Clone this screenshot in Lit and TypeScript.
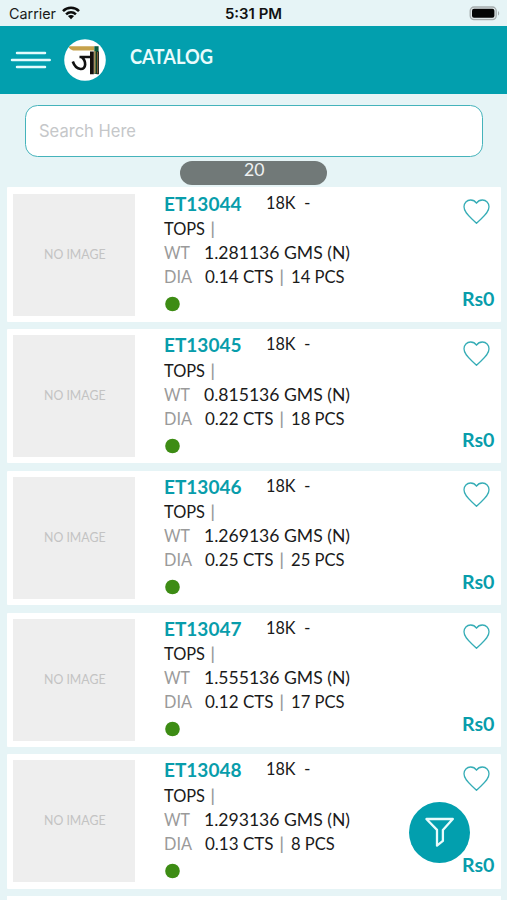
import { LitElement, html, svg, css } from "lit";
import { customElement, property } from "lit/decorators.js";

/** A line of text set to an exact advance width. */
const fit = (text: string, width: number, cls: string, height = 24, baseline = 18) => html`
  <svg class="fit ${cls}" width=${width} height=${height}>
    ${svg`<text x="0" y=${baseline} textLength=${width} lengthAdjust="spacingAndGlyphs">${text}</text>`}
  </svg>`;

interface Item {
  code: string;
  weight: string;
  carats: string;
  pieces: string;
}

const ITEMS: Item[] = [
  { code: "ET13044", weight: "1.281136", carats: "0.14", pieces: "14" },
  { code: "ET13045", weight: "0.815136", carats: "0.22", pieces: "18" },
  { code: "ET13046", weight: "1.269136", carats: "0.25", pieces: "25" },
  { code: "ET13047", weight: "1.555136", carats: "0.12", pieces: "17" },
  { code: "ET13048", weight: "1.293136", carats: "0.13", pieces: "8" },
];

const fitStyles = css`
  .fit {
    display: block;
    flex: none;
    overflow: visible;
    font-family: Lato, "Open Sans", sans-serif;
    font-size: 17.4px;
    fill: #1a1a1a;
  }
`;

@customElement("catalog-card")
export class CatalogCard extends LitElement {
  @property({ attribute: false }) item!: Item;

  static styles = [
    fitStyles,
    css`
      :host {
        display: flex;
        box-sizing: border-box;
        height: 134.3px;
        padding: 6.2px 6.4px 0 6.4px;
        background: #fff;
        border-radius: 1px;
      }
      .thumb {
        width: 122px;
        height: 122px;
        flex: none;
        display: flex;
        align-items: center;
        justify-content: center;
        background: #eeeeee;
      }
      .none { font-size: 12.8px; fill: #c3c3c3; }
      .info { flex: 1; margin-left: 28.2px; }
      .row { display: flex; height: 24px; }
      .first { height: 25.2px; }
      .code { font-size: 19.2px; font-weight: 700; fill: #089dab; }
      .karat { margin-left: 24.5px; }
      .dash { margin-left: 9px; }
      .muted { fill: #9a9a9a; }
      .bar { margin: 0 7.4px 0 5.6px; fill: #9a9a9a; }
      .top-bar { margin-left: 5.4px; fill: #9a9a9a; }
      .wt { margin-left: 14px; }
      .dia { margin-left: 13px; }
      .dot { display: block; margin: 5px 0 0 1px; }
      .side {
        display: flex;
        flex-direction: column;
        align-items: flex-end;
        justify-content: space-between;
        height: 118px;
      }
      .heart { display: block; margin: 5.4px 4.8px 0 0; }
      .price { font-size: 19.6px; font-weight: 700; fill: #089dab; }
    `,
  ];

  render() {
    const { code, weight, carats, pieces } = this.item;
    return html`
      <div class="thumb">${fit("NO IMAGE", 61.5, "none", 14, 11.2)}</div>
      <div class="info">
        <div class="row first">
          ${fit(code, 77.5, "code", 24, 16.7)} ${fit("18K", 29.5, "karat", 24, 15.2)}
          ${fit("-", 6.5, "dash", 24, 15.2)}
        </div>
        <div class="row">${fit("TOPS", 41, "", 24, 16.4)} ${fit("|", 5.4, "top-bar", 24, 16.4)}</div>
        <div class="row">
          ${fit("WT", 26, "muted", 24, 16.2)} ${fit(`${weight} GMS (N)`, 146, "wt", 24, 16.2)}
        </div>
        <div class="row">
          ${fit("DIA", 28, "muted", 24, 16.2)} ${fit(`${carats} CTS`, 68.5, "dia", 24, 16.2)}
          ${fit("|", 5.4, "bar", 24, 16.2)}
          ${fit(`${pieces} PCS`, pieces.length > 1 ? 53.6 : 43.8, "", 24, 16.2)}
        </div>
        <svg class="dot" width="15" height="16" viewBox="0 0 15 16">
          <circle cx="7.5" cy="8" r="7.3" fill="#3d8c14" />
        </svg>
      </div>
      <div class="side">
        <svg class="heart" width="27" height="26" viewBox="0 0 27 26">
          <path
            d="M13.5 4.2C11.8 1.6 9.6 1 7.6 1C3.8 1 1 3.9 1 7.8C1 14.4 8 18.4 13.5 24.3C19 18.4 26 14.4 26 7.8C26 3.9 23.2 1 19.4 1C17.4 1 15.2 1.6 13.5 4.2Z"
            fill="none" stroke="#36adb6" stroke-width="1.3" stroke-linejoin="round"
          />
        </svg>
        ${fit("Rs0", 32.5, "price", 24, 17.7)}
      </div>
    `;
  }
}

@customElement("app-root")
export class AppRoot extends LitElement {
  static styles = [
    fitStyles,
    css`
      :host {
        display: flex;
        flex-direction: column;
        position: relative;
        box-sizing: border-box;
        width: 100%;
        height: 900px;
        overflow: hidden;
        background: #e6f4f6;
      }
      .status {
        flex: none;
        display: grid;
        grid-template-columns: 1fr auto 1fr;
        height: 25.5px;
        padding: 0 7.5px 0 8.5px;
      }
      .left { display: flex; }
      .carrier { font-family: Inter, sans-serif; font-size: 14.3px; }
      .time {
        margin-right: 1px;
        font-family: Inter, sans-serif;
        font-size: 14.3px;
        font-weight: 600;
        fill: #111;
      }
      .wifi { margin: 5.7px 0 0 6.5px; }
      .battery { justify-self: end; margin-top: 5.5px; }
      header {
        flex: none;
        display: flex;
        height: 68.2px;
        padding-left: 10px;
        background: #029fae;
      }
      .menu { margin-top: 25px; }
      .logo { margin: 13.2px 0 0 12.6px; }
      .title { margin-left: 24px; font-size: 20.4px; font-weight: 700; fill: #e9fbfc; }
      .search {
        flex: none;
        box-sizing: border-box;
        height: 52px;
        margin: 11.8px 24.3px 0 25px;
        padding: 12px 0 0 12.5px;
        border: 1.5px solid #45b3bb;
        border-radius: 12.5px;
        background: #fff;
      }
      .hint { font-family: Inter, sans-serif; font-size: 16.6px; fill: #c5c7c9; }
      .count {
        flex: none;
        display: flex;
        justify-content: center;
        width: 147px;
        height: 24.2px;
        margin: 3.3px 0 2.5px 180.4px;
        border-radius: 12.1px;
        background: #717978;
      }
      .num { fill: #eef1f1; }
      .list {
        display: flex;
        flex-direction: column;
        gap: 7.4px;
        padding: 0 6.3px 0 7px;
      }
      .list catalog-card { flex: none; }
      .peek { flex: none; height: 20px; background: #fff; }
      .filter {
        position: absolute;
        right: 36.8px;
        bottom: 36.8px;
        width: 61px;
        height: 61px;
      }
    `,
  ];

  render() {
    return html`
      <div class="status">
        <div class="left">
          ${fit("Carrier", 47, "carrier", 25, 18.8)}
          <svg class="wifi" width="18" height="14" viewBox="0 0 18 14">
            <g fill="none" stroke="#0c0c0c" stroke-width="2.5">
              <path d="M1 5.1C5.3.7 12.7.7 17 5.1" />
              <path d="M4.1 8.3C6.9 5.5 11.1 5.5 13.9 8.3" />
            </g>
            <path d="M5.9 10.1C7.6 8.5 10.4 8.5 12.1 10.1L9 13.3Z" fill="#0c0c0c" />
          </svg>
        </div>
        ${fit("5:31 PM", 57, "time", 25, 18.8)}
        <svg class="battery" width="31" height="15" viewBox="0 0 31 15">
          <rect x="1.2" y="1" width="26" height="12.6" rx="3.8" fill="#dfe7e8" stroke="#a6adae" stroke-width="1.3" />
          <rect x="3" y="2.8" width="22.4" height="9" rx="2" fill="#050505" />
          <path d="M29 5V9.6C30.6 8.8 30.6 5.8 29 5Z" fill="#a6adae" />
        </svg>
      </div>
      <header>
        <svg class="menu" width="41" height="18" viewBox="0 0 41 18">
          <path d="M7 2H35M2 9H39.7M7 16H35" stroke="#e4fbfd" stroke-width="2.5" stroke-linecap="round" />
        </svg>
        <svg class="logo" width="42" height="42" viewBox="0 0 42 42">
          <circle cx="21" cy="21" r="20.8" fill="#fff" />
          <path d="M5.5 7.2H30V11.6H9Q6 10.5 4.8 8.6Z" fill="#c6a24b" />
          <path d="M30.3 7.2H34.6V35H30.3Z" fill="#0d5a3c" />
          <path d="M26 12.5H29.8V35.2H26ZM32.6 12.5H34.8V35.2H32.6Z" fill="#16100e" />
          <path d="M30.3 12H31.5V34.5H30.3ZM33.4 13H34V34.5H33.4Z" fill="#c58f4f" />
          <path d="M15.5 18H27M17.6 18C22.5 22 22.5 30.5 16.5 30C12.5 29.5 10 26 8.8 22.5" fill="none" stroke="#111" stroke-width="2.6" />
        </svg>
        ${fit("CATALOG", 83, "title", 40, 37.5)}
      </header>
      <div class="search">${fit("Search Here", 97, "hint", 24, 18.8)}</div>
      <div class="count">${fit("20", 20.5, "num", 24, 14.8)}</div>
      <div class="list">
        ${ITEMS.map((item) => html`<catalog-card .item=${item}></catalog-card>`)}
        <div class="peek"></div>
      </div>
      <svg class="filter" viewBox="0 0 61 61">
        <circle cx="30.5" cy="30.5" r="30.5" fill="#029fae" />
        <path d="M17.4 17H43.8L33.9 27.9V38.9L28 43.6V27.9Z" fill="none" stroke="#e9fbfc" stroke-width="2.3" stroke-linejoin="round" />
      </svg>
    `;
  }
}
